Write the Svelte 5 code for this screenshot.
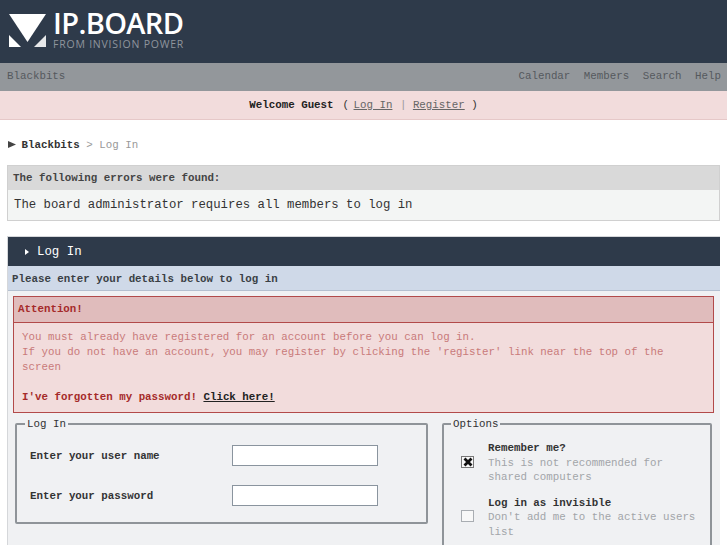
<script lang="ts">
	const nav = ['Calendar', 'Members', 'Search', 'Help']
</script>

<div class="page">
	<header class="logo">
		<svg class="logo__mark" width="38" height="34" viewBox="0 0 38 34" aria-hidden="true">
			<path d="M0 0H37L18.5 28Z" fill="#fff" />
			<path d="M0 21V33H12Z" fill="#fff" />
			<path d="M37 21V33H25Z" fill="#e6e7e9" />
		</svg>
		<div class="logo__text">
			<div class="logo__name">IP.BOARD</div>
			<div class="logo__sub">FROM INVISION POWER</div>
		</div>
	</header>

	<nav class="nav">
		<span class="nav__brand">Blackbits</span>
		<div class="nav__links">
			{#each nav as item}
				<span>{item}</span>
			{/each}
		</div>
	</nav>

	<div class="welcome">
		<b>Welcome Guest</b><span class="welcome__links">(<u class="welcome__login">Log In</u>&nbsp;<i>|</i>&nbsp;<u>Register</u>&nbsp;)</span>
	</div>

	<div class="crumb">
		<svg width="8" height="7" viewBox="0 0 8 7" aria-hidden="true"><path d="M0 0L8 3.5L0 7Z" fill="#444" /></svg>
		<b>Blackbits</b> <span class="crumb__sep">&gt;</span> <span class="crumb__here">Log In</span>
	</div>

	<section class="errors">
		<div class="errors__head">The following errors were found:</div>
		<div class="errors__body">The board administrator requires all members to log in</div>
	</section>

	<section class="main">
		<h1 class="main__title">
			<svg width="4" height="6" viewBox="0 0 4 6" aria-hidden="true"><path d="M0 0L4 3L0 6Z" fill="#fff" /></svg>
			Log In
		</h1>
		<div class="main__sub">Please enter your details below to log in</div>

		<div class="notice">
			<div class="notice__head">Attention!</div>
			<div class="notice__body">
				<p>You must already have registered for an account before you can log in.<br />If you do not have an account, you may register by clicking the 'register' link near the top of the screen</p>
				<p class="notice__forgot"><b>I've forgotten my password!</b> <b class="notice__link">Click here!</b></p>
			</div>
		</div>

		<div class="forms">
			<fieldset class="box box--login">
				<legend>Log In</legend>
				<div class="field">
					<label for="user">Enter your user name</label>
					<input id="user" type="text" />
				</div>
				<div class="field">
					<label for="pass">Enter your password</label>
					<input id="pass" type="password" />
				</div>
			</fieldset>

			<fieldset class="box box--options">
				<legend>Options</legend>
				<div class="option">
					<span class="check check--on">
						<svg width="10" height="10" viewBox="0 0 10 10" aria-hidden="true"><path d="M1.5 1.5L8.5 8.5M8.5 1.5L1.5 8.5" stroke="#111" stroke-width="2.8" /></svg>
					</span>
					<div class="option__text"><b>Remember me?</b><br /><span class="hint">This is not recommended for shared computers</span></div>
				</div>
				<div class="option">
					<span class="check"></span>
					<div class="option__text"><b>Log in as invisible</b><br /><span class="hint">Don't add me to the active users list</span></div>
				</div>
			</fieldset>
		</div>
	</section>
</div>

<style>
	:global(body) {
		margin: 0;
		background: #fff;
	}

	.page {
		height: 545px;
		overflow: hidden;
		font-family: "Liberation Mono", monospace;
		font-size: 10.8px;
		color: #3a3f45;
	}

	.logo {
		height: 63px;
		box-sizing: border-box;
		background: #2e3a4a;
		display: flex;
		align-items: flex-start;
		gap: 7px;
		padding: 14px 0 0 9px;
	}

	.logo__text {
		font-family: "Open Sans", sans-serif;
		margin-top: -6px;
		margin-left: -1px;
	}

	.logo__name {
		font-size: 29px;
		font-weight: 600;
		line-height: 30px;
		color: #fff;
		letter-spacing: -0.65px;
	}

	.logo__sub {
		font-size: 10.5px;
		line-height: 12px;
		color: #8f959d;
		letter-spacing: 0.78px;
	}

	.nav {
		height: 28px;
		box-sizing: border-box;
		background: #93979b;
		display: flex;
		justify-content: space-between;
		align-items: center;
		padding: 0 6px 2px 7px;
		color: #55595e;
	}

	.nav__links {
		display: flex;
		gap: 13.5px;
	}

	.welcome {
		height: 28px;
		background: #f2dcdc;
		border-bottom: 1px solid #e6c8c8;
		display: flex;
		align-items: center;
		justify-content: center;
		color: #333;
	}

	.welcome b {
		color: #222;
	}

	.welcome__links {
		margin-left: 9px;
	}

	.welcome u {
		color: #666;
	}

	.welcome__login {
		margin: 0 1px 0 4.5px;
	}

	.welcome i {
		font-style: normal;
		color: #999;
	}

	.crumb {
		margin: 19px 7px 0 8px;
		line-height: 13px;
		color: #333;
	}

	.crumb b {
		margin-left: -1px;
	}

	.crumb__sep,
	.crumb__here {
		color: #999;
	}

	.errors {
		margin: 13px 7px 0;
		border: 1px solid #d0d0d0;
		background: #f3f5f4;
	}

	.errors__head {
		background: #d9d9d9;
		padding: 0 5px;
		line-height: 24px;
		font-weight: bold;
		color: #444;
	}

	.errors__body {
		padding: 0 6px;
		line-height: 30px;
		font-size: 12.3px;
		color: #333;
	}

	.main {
		margin: 15px 7px 0;
		border-left: 1px solid #d5d7da;
		border-top: 1px solid #d5d7da;
		background: #f0f1f3;
		padding-bottom: 20px;
	}

	.main__title {
		margin: 0;
		height: 29px;
		background: #2e3a4a;
		color: #fff;
		font-size: 12.4px;
		font-weight: normal;
		display: flex;
		align-items: center;
		gap: 8px;
		padding-left: 17px;
	}

	.main__sub {
		height: 25px;
		box-sizing: border-box;
		background: #cfd9e8;
		border-bottom: 1px solid #b4c0d0;
		padding: 1px 4px 0;
		line-height: 24px;
		font-weight: bold;
		color: #3a3f45;
	}

	.notice {
		margin: 5px 6px 0 5px;
		border: 1px solid #b24a4a;
		background: #f2dcdc;
		color: #c97a7a;
	}

	.notice__head {
		background: #e0bcbc;
		border-bottom: 1px solid #b24a4a;
		padding: 0 4px;
		line-height: 25px;
		font-weight: bold;
		color: #a52a2a;
	}

	.notice__body {
		padding: 7px 8px 7px;
		line-height: 15px;
	}

	.notice__body p {
		margin: 0;
	}

	.notice__forgot {
		padding-top: 15px;
		color: #a52a2a;
	}

	.notice__link {
		color: #222;
		text-decoration: underline;
	}

	.forms {
		display: flex;
		align-items: flex-start;
		gap: 14px;
		margin: 5px 7px 0;
	}

	.box {
		margin: 0;
		border: 2px solid #8f9499;
		border-radius: 2px;
		box-sizing: border-box;
	}

	.box legend {
		padding: 0 2px;
		color: #333;
	}

	.box--login {
		width: 413px;
		height: 106px;
		padding: 15px 14px 0 13px;
	}

	.box--login legend {
		margin-left: -5px;
	}

	.box--options {
		width: 270px;
		padding: 11px 6px 0 17px;
	}

	.box--options legend {
		margin-left: -10px;
	}

	.field {
		display: flex;
		align-items: center;
		justify-content: space-between;
		margin-bottom: 19px;
		padding-right: 34px;
	}

	.field label {
		font-weight: bold;
		color: #333;
	}

	.field input {
		width: 146px;
		height: 21px;
		box-sizing: border-box;
		border: 1px solid #8a949e;
		background: #fff;
		padding: 0;
	}

	.option {
		display: flex;
		align-items: center;
		gap: 14px;
		line-height: 14.5px;
		margin-bottom: 11px;
		color: #333;
	}

	.hint {
		color: #a2a5a9;
	}

	.check {
		flex: none;
		width: 11px;
		height: 10px;
		margin-top: -2px;
		border: 1px solid #a9adb2;
		background: #f8f8f8;
		display: flex;
		align-items: center;
		justify-content: center;
	}

	.check--on {
		border-color: #777;
	}
</style>
